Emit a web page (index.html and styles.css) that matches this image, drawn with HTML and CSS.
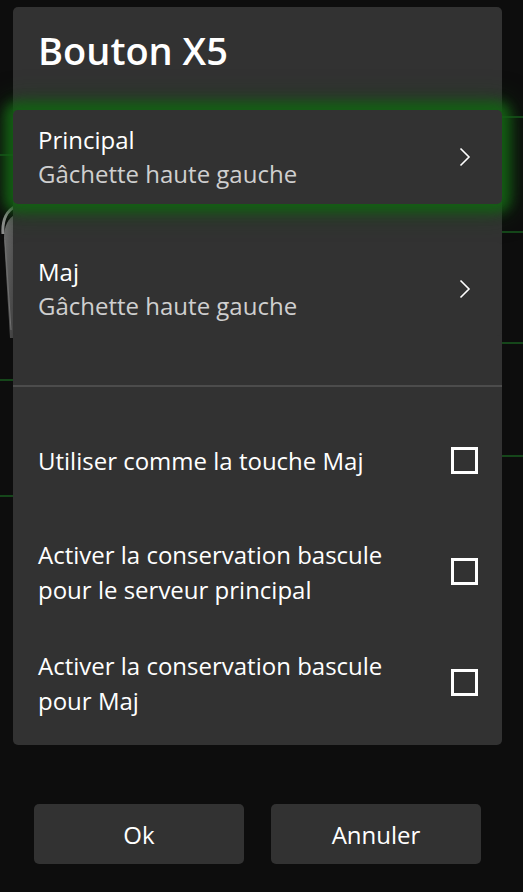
FILE: index.html
```html
<!DOCTYPE html>
<html lang="fr">
<head>
  <meta charset="UTF-8" />
  <title>Bouton X5</title>
  <meta name="viewport" content="width=device-width, initial-scale=1" />
  <link rel="stylesheet" href="styles.css">
</head>
<body>
  <!-- background: mouse diagram peeking out behind the dialog -->
  <div class="backdrop">
    <svg class="mouse-shell" width="16" height="140" viewBox="0 0 16 140">
      <defs>
        <linearGradient id="shell" x1="0" y1="0" x2="1" y2="1">
          <stop offset="0" stop-color="#6e6e6e" />
          <stop offset="1" stop-color="#3a3a3a" />
        </linearGradient>
      </defs>
      <path d="M16 14 C8 18 4 26 4 38 L10 138 L16 138 Z" fill="url(#shell)" />
      <path d="M16 6 C7 10 2 20 3 34" fill="none" stroke="#8e8e8e" stroke-width="3" />
      <path d="M5 40 L11 130" fill="none" stroke="#707070" stroke-width="1" />
    </svg>
    <div class="lead lead-l1"></div>
    <div class="lead lead-l2"></div>
    <div class="lead lead-l3"></div>
    <div class="lead lead-r1"></div>
    <div class="lead lead-r2"></div>
    <div class="lead lead-r3"></div>
    <div class="lead lead-r4"></div>
  </div>

  <!-- dialog panel -->
  <div class="dialog">
    <h1 class="dialog-title">Bouton X5</h1>

    <div class="nav-row active">
      <div class="nav-text">
        <div class="nav-label">Principal</div>
        <div class="nav-value">Gâchette haute gauche</div>
      </div>
      <svg class="chevron" width="12" height="20" viewBox="0 0 12 20">
        <path d="M1.5 1.5 L10 10 L1.5 18.5" fill="none" stroke="#fff" stroke-width="1.6" />
      </svg>
    </div>

    <div class="nav-row second">
      <div class="nav-text">
        <div class="nav-label">Maj</div>
        <div class="nav-value">Gâchette haute gauche</div>
      </div>
      <svg class="chevron" width="12" height="20" viewBox="0 0 12 20">
        <path d="M1.5 1.5 L10 10 L1.5 18.5" fill="none" stroke="#fff" stroke-width="1.6" />
      </svg>
    </div>

    <div class="divider"></div>

    <div class="checks">
      <div class="check-row">
        <div class="check-label">Utiliser comme la touche Maj</div>
        <div class="check-box"></div>
      </div>
      <div class="check-row">
        <div class="check-label">Activer la conservation bascule<br />pour le serveur principal</div>
        <div class="check-box"></div>
      </div>
      <div class="check-row">
        <div class="check-label">Activer la conservation bascule<br />pour Maj</div>
        <div class="check-box"></div>
      </div>
    </div>
  </div>

  <!-- Ok / Annuler -->
  <div class="actions">
    <button class="action-btn">Ok</button>
    <button class="action-btn">Annuler</button>
  </div>
</body>
</html>
```

FILE: styles.css
```css
/* -----------------------------------------------
   1. Reset + page
   ----------------------------------------------- */
* {
  margin: 0;
  padding: 0;
  box-sizing: border-box;
}

body {
  width: 523px;
  height: 892px;
  overflow: hidden;
  position: relative;
  background: #0d0d0d;
  font-family: 'Open Sans', 'Noto Sans', sans-serif;
  color: #ffffff;
  padding-top: 7px;
}

/* -----------------------------------------------
   2. Backdrop (mouse diagram behind the dialog)
   ----------------------------------------------- */
.backdrop {
  position: absolute;
  inset: 0;
}
.mouse-shell {
  position: absolute;
  left: 0;
  top: 200px;
}
.lead {
  position: absolute;
  height: 2px;
  background: #15461a;
}
.lead-l1 { left: 0; width: 20px; top: 154px; }
.lead-l2 { left: 0; width: 20px; top: 379px; }
.lead-l3 { left: 0; width: 20px; top: 495px; }
.lead-r1 { right: 0; width: 30px; top: 116px; }
.lead-r2 { right: 0; width: 30px; top: 231px; }
.lead-r3 { right: 0; width: 30px; top: 342px; }
.lead-r4 { right: 0; width: 30px; top: 455px; }

/* -----------------------------------------------
   3. Dialog panel
   ----------------------------------------------- */
.dialog {
  position: relative;
  margin-left: 13px;
  width: 489px;
  height: 738px;
  background: #323232;
  border-radius: 5px;
}

.dialog-title {
  height: 103px;
  padding: 16px 0 0 25px;
  font-size: 38px;
  font-weight: 600;
  line-height: 54px;
}

/* -----------------------------------------------
   4. Navigation rows (Principal / Maj)
   ----------------------------------------------- */
.nav-row {
  height: 94px;
  display: flex;
  align-items: center;
  justify-content: space-between;
  padding: 0 31px 0 25px;
  border-radius: 5px;
  background: #323232;
}
.nav-row.active {
  box-shadow:
    0 0 12px 8px rgba(20, 96, 20, 0.95),
    0 0 26px 10px rgba(20, 80, 20, 0.5);
}
.nav-row.second {
  margin-top: 38px;
}

.nav-label,
.nav-value {
  font-size: 24px;
  line-height: 34px;
}
.nav-value {
  color: #cfcfcf;
}

.chevron {
  display: block;
}

.divider {
  margin-top: 49px;
  height: 2px;
  background: #4c4c4c;
}

/* -----------------------------------------------
   5. Checkbox rows
   ----------------------------------------------- */
.checks {
  padding-top: 18px;
}
.check-row {
  height: 111px;
  display: flex;
  align-items: center;
  justify-content: space-between;
  padding: 0 24px 0 25px;
}
.check-label {
  font-size: 24px;
  line-height: 35px;
}
.check-box {
  width: 27px;
  height: 27px;
  border: 3px solid #ffffff;
  flex-shrink: 0;
}

/* -----------------------------------------------
   6. Bottom buttons
   ----------------------------------------------- */
.actions {
  display: flex;
  gap: 27px;
  padding-left: 34px;
  margin-top: 59px;
}
.action-btn {
  width: 210px;
  height: 60px;
  border: none;
  border-radius: 5px;
  background: #323232;
  color: #ffffff;
  font-family: inherit;
  font-size: 24px;
}
```
